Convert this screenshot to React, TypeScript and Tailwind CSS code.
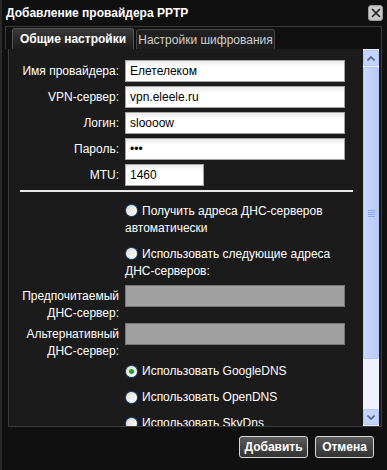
import React from "react";

const font = { fontFamily: '"Liberation Sans", Arial, sans-serif' };

const Radio: React.FC<{ checked?: boolean }> = ({ checked }) => (
  <span className="relative inline-block h-[13px] w-[13px] rounded-full border border-[#1c5180] bg-gradient-to-br from-[#dcdcd5] to-white align-[-2px] mr-[4px]">
    {checked && (
      <span className="absolute left-[3px] top-[3px] h-[5px] w-[5px] rounded-full bg-[#21a121]" />
    )}
  </span>
);

const Field: React.FC<{ label: string; value: string; short?: boolean }> = ({
  label,
  value,
  short,
}) => (
  <div className="mb-[4px] flex h-[22px] items-center">
    <div className="w-[110px] text-right text-[12px] text-white">{label}</div>
    <div
      className={
        "ml-[6px] flex h-[22px] items-center border border-[#a5a5a5] bg-gradient-to-b from-[#ececec] to-white to-[30%] px-[4px] text-[12px] text-black " +
        (short ? "w-[79px]" : "w-[220px]")
      }
    >
      {value}
    </div>
  </div>
);

const App: React.FC = () => {
  return (
    <div
      className="relative h-[470px] w-[387px] overflow-hidden border-l-2 border-[#2a2a2a] bg-[#101010]"
      style={font}
    >
      {/* title */}
      <div className="flex h-[26px] items-center justify-between pl-[4px] pr-[4px]">
        <span className="text-[12px] font-bold text-white">Добавление провайдера PPTP</span>
        <div className="flex h-[16px] w-[15px] items-center justify-center rounded-[3px] border border-[#9a9a9a] bg-[#c8c8c8]">
          <svg width="10" height="10" viewBox="0 0 10 10">
            <path d="M1 1L9 9M9 1L1 9" stroke="#1a1a1a" strokeWidth="1.6" />
          </svg>
        </div>
      </div>

      {/* tab strip */}
      <div className="ml-[3px] mr-[5px] flex h-[23px] items-end border border-b-0 border-[#3a3a3a] pl-[6px]">
        <div className="flex h-[21px] w-[122px] items-center justify-center rounded-t-[3px] border border-b-0 border-[#555] bg-gradient-to-b from-[#3a3a3a] to-[#1b1b1b] text-[12px] font-bold text-white">
          Общие настройки
        </div>
        <div className="ml-[2px] flex h-[20px] w-[139px] items-center justify-center rounded-t-[3px] border border-b-0 border-[#444] bg-[#1f1f1f] text-[12px] text-[#d0d0d0]">
          Настройки шифрования
        </div>
      </div>

      {/* panel */}
      <div className="ml-[6px] mr-[5px] flex h-[378px] border border-t-0 border-[#3c3c3c] bg-[#1b1b1b]">
        <div className="flex-1 overflow-hidden pt-[11px]">
          <Field label="Имя провайдера:" value="Елетелеком" />
          <Field label="VPN-сервер:" value="vpn.eleele.ru" />
          <Field label="Логин:" value="sloooow" />
          <Field label="Пароль:" value="•••" />
          <Field label="MTU:" value="1460" short />

          <div className="ml-[11px] mt-[3px] h-[2px] w-[333px] bg-[#e8e8e8]" />

          <div className="ml-[116px] mt-[11px] text-[12px] leading-[17px] text-white">
            <Radio />
            Получить адреса ДНС-серверов
            <br />
            автоматически
          </div>
          <div className="ml-[116px] mt-[9px] text-[12px] leading-[17px] text-white">
            <Radio />
            Использовать следующие адреса
            <br />
            ДНС-серверов:
          </div>

          <div className="mt-[5px] flex items-start">
            <div className="w-[110px] pt-[3px] text-right text-[12px] leading-[17px] text-white">
              Предпочитаемый
              <br />
              ДНС-сервер:
            </div>
            <div className="ml-[6px] h-[22px] w-[220px] border border-[#777] bg-[#a0a0a0]" />
          </div>
          <div className="mt-[1px] flex items-start">
            <div className="w-[110px] pt-[3px] text-right text-[12px] leading-[17px] text-white">
              Альтернативный
              <br />
              ДНС-сервер:
            </div>
            <div className="ml-[6px] h-[22px] w-[220px] border border-[#777] bg-[#a0a0a0]" />
          </div>

          <div className="ml-[116px] mt-[-2px] flex h-[26px] items-center text-[12px] text-white">
            <Radio checked />
            Использовать GoogleDNS
          </div>
          <div className="ml-[116px] flex h-[26px] items-center text-[12px] text-white">
            <Radio />
            Использовать OpenDNS
          </div>
          <div className="ml-[116px] flex h-[26px] items-center text-[12px] text-white">
            <Radio />
            Использовать SkyDns
          </div>
        </div>

        {/* scrollbar */}
        <div className="mr-[2px] flex w-[16px] flex-col bg-[#eef2fc]">
          <div className="mt-[1px] flex h-[16px] items-center justify-center rounded-[2px] border border-[#b4c8f6] bg-[#c4d4fc]">
            <svg width="8" height="5" viewBox="0 0 8 5">
              <path d="M0.5 4.5L4 1L7.5 4.5" stroke="#4d6185" strokeWidth="1.6" fill="none" />
            </svg>
          </div>
          <div className="mt-[1px] flex h-[292px] items-center justify-center rounded-[2px] border border-[#b4c8f6] bg-gradient-to-r from-[#c9d8fc] to-[#b8cbf8]">
            <div className="flex flex-col gap-[1px]">
              <div className="h-[1px] w-[7px] bg-[#8ca8ec]" />
              <div className="h-[1px] w-[7px] bg-[#8ca8ec]" />
              <div className="h-[1px] w-[7px] bg-[#8ca8ec]" />
              <div className="h-[1px] w-[7px] bg-[#8ca8ec]" />
            </div>
          </div>
          <div className="flex-1" />
          <div className="mb-[1px] flex h-[16px] items-center justify-center rounded-[2px] border border-[#b4c8f6] bg-[#c4d4fc]">
            <svg width="8" height="5" viewBox="0 0 8 5">
              <path d="M0.5 0.5L4 4L7.5 0.5" stroke="#4d6185" strokeWidth="1.6" fill="none" />
            </svg>
          </div>
        </div>
      </div>

      {/* buttons */}
      <div className="mt-[9px] flex justify-end gap-[7px] pr-[13px]">
        <button className="h-[22px] w-[69px] rounded-[3px] border border-[#d8d8d8] bg-gradient-to-b from-[#5a5a5a] to-[#333] text-[12px] font-bold text-white">
          Добавить
        </button>
        <button className="h-[22px] w-[59px] rounded-[3px] border border-[#d8d8d8] bg-gradient-to-b from-[#5a5a5a] to-[#333] text-[12px] font-bold text-white">
          Отмена
        </button>
      </div>
    </div>
  );
};

export default App;
